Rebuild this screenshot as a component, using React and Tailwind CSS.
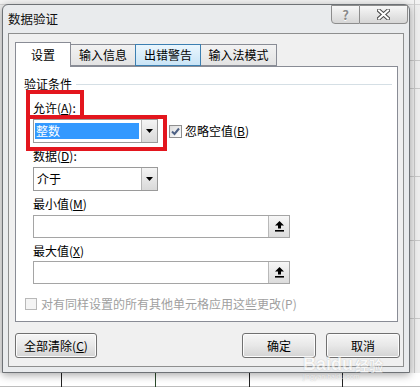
const FONT = "font-['Noto_Sans_CJK_SC','Noto_Sans',sans-serif]";

function DropButton() {
  return (
    <div className="w-[16px] h-full border-l border-[#b5b5b5] bg-linear-to-b from-[#f4f4f4] to-[#d9d9d9] flex items-center justify-center">
      <svg width="7" height="4" viewBox="0 0 7 4">
        <polygon points="0,0 7,0 3.5,4" fill="#000" />
      </svg>
    </div>
  );
}

function Combo({ children }) {
  return (
    <div className="w-[125px] h-[24px] border border-[#9a9a9a] bg-white flex items-stretch">
      <div className="flex-1 flex items-center pl-[1px]">{children}</div>
      <DropButton />
    </div>
  );
}

function RefInput() {
  return (
    <div className="w-[257px] h-[23px] border border-[#a5a5a5] bg-white flex justify-end">
      <div className="w-[21px] h-full border-l border-[#b9b9b9] bg-linear-to-b from-[#f7f7f7] to-[#dcdcdc] flex items-center justify-center">
        <svg width="9" height="11" viewBox="0 0 9 11">
          <polygon points="4.5,0 9,4.5 6,4.5 6,7.5 3,7.5 3,4.5 0,4.5" fill="#000" />
          <rect x="0" y="9" width="9" height="1.6" fill="#000" />
        </svg>
      </div>
    </div>
  );
}

function Button({ children, className = "" }) {
  return (
    <div
      className={`h-[25px] rounded-[3px] border border-[#707070] bg-linear-to-b from-[#f6f6f6] via-[#e8e8e8] to-[#d3d3d3] shadow-[inset_0_0_0_1px_#fcfcfc] flex items-center justify-center ${className}`}
    >
      {children}
    </div>
  );
}

function Backdrop() {
  return (
    <div className="absolute inset-0 bg-[#eeeeee]">
      <div className="h-[5px] bg-[#f3f3f3] border-b border-[#d4d4d4]" />
      <div className="absolute right-[5px] top-0 h-full w-px bg-[#c9c9c9]" />
      <div className="absolute right-0 top-[60px] w-[10px] h-px bg-[#c9c9c9]" />
      <div className="absolute right-0 top-[88px] w-[10px] h-px bg-[#c9c9c9]" />
      <div className="absolute right-0 top-[176px] w-[10px] h-px bg-[#c9c9c9]" />
      <div className="absolute right-0 top-[240px] w-[10px] h-px bg-[#c9c9c9]" />
      <div className="absolute right-0 top-[318px] w-[10px] h-px bg-[#c9c9c9]" />
      <div className="absolute left-0 bottom-0 w-full h-[14px] bg-white border-b border-[#bdbdbd]" />
      <div className="absolute bottom-0 left-[61px] w-px h-[14px] bg-[#222]" />
      <div className="absolute bottom-0 left-[155px] w-px h-[14px] bg-[#2a4a2a]" />
      <div className="absolute bottom-0 left-[249px] w-px h-[14px] bg-[#222]" />
      <div className="absolute bottom-0 left-[342px] w-px h-[14px] bg-[#222]" />
    </div>
  );
}

export default function App() {
  return (
    <div className={`relative w-[420px] h-[387px] overflow-hidden text-[12px] leading-4 text-black ${FONT}`}>
      <Backdrop />

      <div className="relative pl-[2px] pt-[4px]">
        {/* dialog window */}
        <div className="relative w-[408px] h-[369px] border border-[#6e7276] rounded-t-[6px] bg-[#e9ebed] shadow-[0_2px_8px_rgba(0,0,0,0.35)] flex flex-col">
          {/* title bar */}
          <div className="h-[28px] flex items-start justify-between">
            <div className="pl-[5px] pt-[6px] text-[12.5px] text-[#111]">数据验证</div>
            <div className="flex mr-[1px]">
              <div className="w-[29px] h-[19px] border border-[#8d8d8d] rounded-bl-[4px] bg-linear-to-b from-[#f7f7f7] to-[#d6d6d6] flex items-center justify-center text-[13px] font-bold text-[#8a8a8a] [text-shadow:0_1px_0_#fff]">
                ?
              </div>
              <div className="w-[48px] h-[19px] border border-l-0 border-[#8d8d8d] rounded-br-[4px] bg-linear-to-b from-[#f7f7f7] to-[#d6d6d6] flex items-center justify-center">
                <svg width="13" height="11" viewBox="0 0 13 11">
                  <path d="M2 1.5 L11 9.5 M11 1.5 L2 9.5" stroke="#4a4a4a" strokeWidth="4" strokeLinecap="square" />
                  <path d="M2 1.5 L11 9.5 M11 1.5 L2 9.5" stroke="#fff" strokeWidth="2" strokeLinecap="square" />
                </svg>
              </div>
            </div>
          </div>

          {/* client area */}
          <div className="ml-[5px] w-[396px] h-[334px] border border-[#8e8f8f] bg-[#f0f0f0] pt-[8px] pl-[6px] pr-[5px] flex flex-col">
            {/* tabs */}
            <div className="relative z-10 -mb-px h-[25px] flex items-start">
              <div className="w-[56px] h-[25px] border border-b-0 border-[#898c95] bg-white flex items-center justify-center pb-[1px]">
                设置
              </div>
              <div className="mt-[2px] w-[64px] h-[22px] border border-l-0 border-r-0 border-[#898c95] bg-linear-to-b from-[#f2f2f2] to-[#e3e3e3] flex items-center justify-center">
                输入信息
              </div>
              <div className="mt-[2px] w-[66px] h-[22px] border border-[#3c7fb1] bg-linear-to-b from-[#eaf6fd] to-[#c9e4f6] flex items-center justify-center">
                出错警告
              </div>
              <div className="mt-[2px] w-[76px] h-[22px] border border-l-0 border-[#898c95] bg-linear-to-b from-[#f2f2f2] to-[#e3e3e3] flex items-center justify-center">
                输入法模式
              </div>
            </div>

            {/* tab panel */}
            <div className="relative w-[383px] h-[256px] border border-[#898c95] bg-white flex flex-col">
              <div className="mt-[9px] ml-[8px] mr-[5px] h-[16px] flex items-center gap-[4px]">
                <span>验证条件</span>
                <div className="flex-1 h-px bg-[#d5dfe5]" />
              </div>

              <div className="mt-[8px] pl-[17px]">
                允许(<u>A</u>):
              </div>

              <div className="mt-[3px] pl-[17px] flex items-center">
                <Combo>
                  <div className="w-[104px] h-[16px] bg-[#3399ff] text-white pl-[1px] flex items-center">整数</div>
                </Combo>
                <div className="ml-[11px] w-[13px] h-[13px] border border-[#8f8f8f] bg-linear-to-br from-[#dcdcdc] to-white flex items-center justify-center">
                  <svg width="11" height="11" viewBox="0 0 11 11">
                    <path d="M2 5.5 L4.5 8 L9 2.5" stroke="#4d6185" strokeWidth="2" fill="none" />
                  </svg>
                </div>
                <span className="ml-[3px]">
                  忽略空值(<u>B</u>)
                </span>
              </div>

              <div className="mt-[5px] pl-[17px]">
                数据(<u>D</u>):
              </div>
              <div className="mt-[3px] pl-[17px]">
                <Combo>
                  <span className="pl-[2px]">介于</span>
                </Combo>
              </div>

              <div className="mt-[5px] pl-[17px]">
                最小值(<u>M</u>)
              </div>
              <div className="mt-[3px] pl-[17px]">
                <RefInput />
              </div>

              <div className="mt-[5px] pl-[17px]">
                最大值(<u>X</u>)
              </div>
              <div className="mt-[2px] pl-[17px]">
                <RefInput />
              </div>

              <div className="mt-[12px] pl-[9px] h-[16px] flex items-center text-[#a0a0a0]">
                <div className="w-[12px] h-[12px] border border-[#b8b8b8] bg-[#f4f4f4]" />
                <span className="ml-[4px]">对有同样设置的所有其他单元格应用这些更改(P)</span>
              </div>

              {/* red annotation boxes */}
              <div className="absolute left-[10px] top-[23px] w-[58px] h-[29px] border-[4px] border-[#e3161e]" />
              <div className="absolute left-[10px] top-[48px] w-[141px] h-[36px] border-[4px] border-[#e3161e]" />
            </div>

            {/* buttons */}
            <div className="mt-[11px] flex items-center">
              <Button className="w-[82px]">
                全部清除(<u>C</u>)
              </Button>
              <Button className="ml-auto w-[74px]">确定</Button>
              <Button className="ml-[10px] mr-[-2px] w-[74px]">取消</Button>
            </div>
          </div>

          {/* watermark */}
          <div className="pointer-events-none absolute left-[300px] top-[350px] flex flex-col items-start opacity-60">
            <div className="flex items-end text-[18px] leading-[18px] font-bold text-white [text-shadow:0_0_1px_#8a8a8a]">
              <span className="font-['Liberation_Sans',sans-serif]">Baidu</span>
              <span className="ml-[2px] text-[14px] leading-[16px]">经验</span>
            </div>
            <div className="text-[7px] leading-[8px] text-white [text-shadow:0_0_1px_#8a8a8a] font-['Liberation_Sans',sans-serif]">
              jingyan.baidu.com
            </div>
          </div>
        </div>
      </div>
    </div>
  );
}
